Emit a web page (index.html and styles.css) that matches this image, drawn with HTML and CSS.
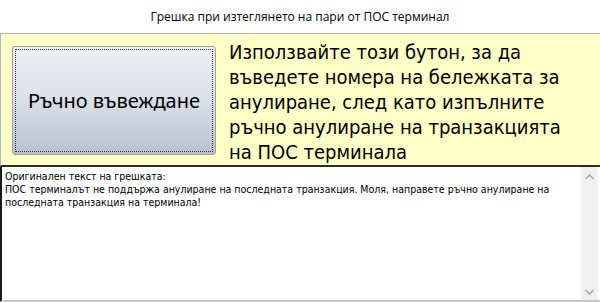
FILE: index.html
```html
<!DOCTYPE html>
<html>
<head>
<meta charset="utf-8">
<link rel="stylesheet" href="styles.css">
</head>
<body>
<div class="window">
  <div class="titlebar">Грешка при изтеглянето на пари от ПОС терминал</div>
  <div class="panel">
    <div class="btn-wrap">
      <button class="btn"><span class="focus">Ръчно въвеждане</span></button>
    </div>
    <div class="hint">Използвайте този бутон, за да въведете номера на бележката за анулиране, след като изпълните ръчно анулиране на транзакцията на ПОС терминала</div>
  </div>
  <div class="textbox">
    <div class="text">Оригинален текст на грешката:<br>ПОС терминалът не поддържа анулиране на последната транзакция. Моля, направете ръчно анулиране на последната транзакция на терминала!</div>
    <div class="scrollbar">
      <svg class="arrow" width="9" height="6" viewBox="0 0 9 6"><path d="M0.5 5 L4.5 1 L8.5 5" fill="none" stroke="#a6a6a6" stroke-width="1.5"/></svg>
      <svg class="arrow" width="9" height="6" viewBox="0 0 9 6"><path d="M0.5 1 L4.5 5 L8.5 1" fill="none" stroke="#a6a6a6" stroke-width="1.5"/></svg>
    </div>
  </div>
</div>
</body>
</html>
```
FILE: styles.css
```css
html, body {
  margin: 0;
  padding: 0;
  background: #ffffff;
}
.window {
  width: 600px;
  height: 302px;
  display: flex;
  flex-direction: column;
  font-family: "DejaVu Sans", sans-serif;
}
.titlebar {
  height: 33px;
  line-height: 34px;
  text-align: center;
  font-family: "Open Sans", sans-serif;
  font-size: 12px;
  color: #000;
}
.panel {
  height: 131px;
  background: #ffffc8;
  border-top: 1px solid #a7b4c9;
  border-left: 1px solid #a7b4c9;
  border-bottom: 2px solid #2b2b2b;
  display: flex;
  align-items: flex-start;
}
.btn-wrap {
  padding: 12px 0 0 11px;
}
.btn {
  width: 204px;
  height: 109px;
  margin: 0;
  padding: 2px;
  border: 1px solid #a0a0a0;
  border-radius: 3px;
  background: linear-gradient(to bottom, #eceef3 0%, #dde1ea 45%, #b9c1d1 100%);
  display: flex;
  box-sizing: border-box;
}
.focus {
  flex: 1;
  border: 1px dotted #333;
  display: flex;
  align-items: center;
  justify-content: center;
  font-family: "Noto Sans", sans-serif;
  font-size: 20px;
  color: #000;
}
.hint {
  padding: 6px 0 0 13px;
  font-family: "DejaVu Sans Condensed", "DejaVu Sans", sans-serif;
  font-size: 20px;
  line-height: 25px;
  color: #000;
  width: 355px;
}
.textbox {
  flex: 1;
  display: flex;
  border-left: 2px solid #1a1a1a;
  border-bottom: 2px solid #c8c8c8;
}
.text {
  flex: 1;
  padding: 3px 0 0 3px;
  font-family: "DejaVu Sans Condensed", sans-serif;
  font-size: 10.5px;
  line-height: 13px;
  color: #000;
}
.scrollbar {
  width: 17px;
  margin-right: 2px;
  background: #f0f0f0;
  display: flex;
  flex-direction: column;
  justify-content: space-between;
  align-items: center;
  padding: 7px 0 5px;
}
.arrow {
  display: block;
}
```
